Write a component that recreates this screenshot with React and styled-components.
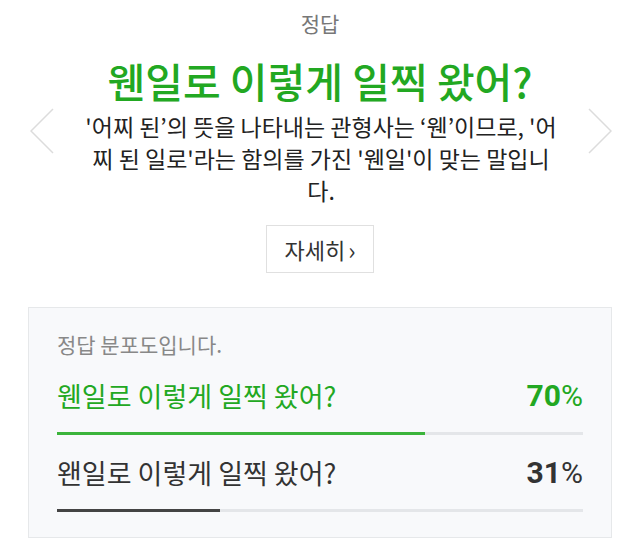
import styled, { createGlobalStyle } from 'styled-components'

const GlobalStyle = createGlobalStyle`
	body {
		margin: 0;
		background: #ffffff;
		font-family: 'Noto Sans CJK KR', 'Noto Sans', sans-serif;
	}
`

const answers = [
	{ text: '웬일로 이렇게 일찍 왔어?', percent: 70, correct: true },
	{ text: '왠일로 이렇게 일찍 왔어?', percent: 31, correct: false },
]

const Chevron = ({ dir }) => (
	<ChevronSvg viewBox="0 0 24 46">
		{dir === 'left' ? (
			<polyline points="23,1 1,23 23,45" />
		) : (
			<polyline points="1,1 23,23 1,45" />
		)}
	</ChevronSvg>
)

export default function App() {
	return (
		<>
			<GlobalStyle />
			<Page>
				<Label>정답</Label>
				<Title>웬일로 이렇게 일찍 왔어?</Title>
				<ExplainRow>
					<Chevron dir="left" />
					<Explain>
						'어찌 된’의 뜻을 나타내는 관형사는 ‘웬’이므로, '어
						<br />
						찌 된 일로'라는 함의를 가진 '웬일'이 맞는 말입니
						<br />
						다.
					</Explain>
					<Chevron dir="right" />
				</ExplainRow>
				<MoreButton>
					자세히<MoreArrow>›</MoreArrow>
				</MoreButton>
				<Card>
					<CardCaption>정답 분포도입니다.</CardCaption>
					{answers.map((a) => (
						<Answer key={a.text}>
							<AnswerHead $correct={a.correct}>
								<AnswerText>{a.text}</AnswerText>
								<Percent>
									<b>{a.percent}</b>%
								</Percent>
							</AnswerHead>
							<Track>
								<Fill $correct={a.correct} style={{ width: `${a.percent}%` }} />
							</Track>
						</Answer>
					))}
				</Card>
			</Page>
		</>
	)
}

const Page = styled.div`
	width: 640px;
	height: 545px;
	display: flex;
	flex-direction: column;
	align-items: center;
	overflow: hidden;
`

const Label = styled.div`
	margin-top: 8px;
	font-size: 21px;
	line-height: 30px;
	color: #777;
`

const Title = styled.h1`
	margin: 17px 0 0;
	font-size: 41px;
	font-weight: 500;
	line-height: 50px;
	color: #22a822;
`

const ExplainRow = styled.div`
	align-self: stretch;
	display: flex;
	justify-content: space-between;
	align-items: flex-start;
	padding: 0 28px 0 30px;
	margin-top: 3px;
`

const ChevronSvg = styled.svg`
	width: 24px;
	height: 46px;
	flex-shrink: 0;

	polyline {
		fill: none;
		stroke: #dcdcdc;
		stroke-width: 1.5;
	}
`

const Explain = styled.p`
	margin: 2px 0 0;
	flex: 1;
	text-align: center;
	font-size: 23px;
	line-height: 32px;
	color: #222;
`

const MoreButton = styled.button`
	margin-top: 19px;
	width: 108px;
	height: 48px;
	display: flex;
	align-items: center;
	justify-content: center;
	background: #fff;
	border: 1px solid #e0e0e0;
	font-family: inherit;
	font-size: 22px;
	color: #333;
	padding: 0;
`

const MoreArrow = styled.span`
	margin-left: 3px;
	font-size: 24px;
`

const Card = styled.div`
	margin-top: 34px;
	width: 584px;
	height: 231px;
	box-sizing: border-box;
	border: 1px solid #e6e8ea;
	background: #f8f9fb;
	padding: 21px 28px 0;
	display: flex;
	flex-direction: column;
`

const CardCaption = styled.div`
	font-size: 21px;
	line-height: 30px;
	color: #888;
`

const Answer = styled.div`
	margin-top: 16px;

	& + & {
		margin-top: 17px;
	}
`

const AnswerHead = styled.div`
	display: flex;
	justify-content: space-between;
	align-items: center;
	height: 40px;
	color: ${(p) => (p.$correct ? '#22a822' : '#333')};
`

const AnswerText = styled.span`
	font-size: 27px;
`

const Percent = styled.span`
	font-family: Roboto, 'Noto Sans', sans-serif;
	font-size: 30px;

	b {
		font-weight: 700;
	}
`

const Track = styled.div`
	margin-top: 17px;
	height: 3px;
	background: #e4e6e9;
`

const Fill = styled.div`
	height: 100%;
	background: ${(p) => (p.$correct ? '#3bb43b' : '#444')};
`
